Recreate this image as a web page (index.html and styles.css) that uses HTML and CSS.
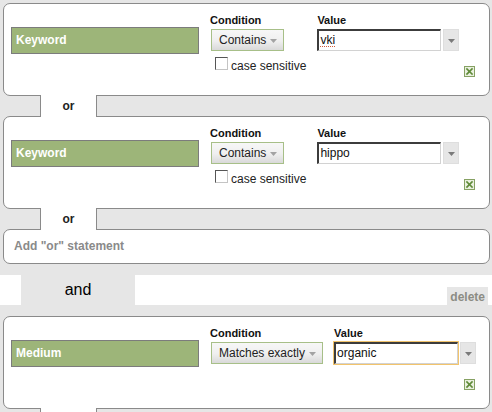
FILE: index.html
```html
<!DOCTYPE html>
<html>
<head>
<meta charset="utf-8">
<link rel="stylesheet" href="styles.css">
</head>
<body>
<div class="group">
  <div class="box rule">
    <div class="field">Keyword</div>
    <div class="cond">
      <div class="label">Condition</div>
      <div class="select">Contains<svg class="caret" width="7" height="4" viewBox="0 0 7 4"><polygon points="0,0 7,0 3.5,4"/></svg></div>
      <div class="check"><span class="cb"></span><span class="cb-text">case sensitive</span></div>
    </div>
    <div class="value">
      <div class="label">Value</div>
      <div class="combo">
        <div class="input"><span class="misspelled">vki</span></div>
        <div class="drop"><svg class="caret dark" width="7" height="4" viewBox="0 0 7 4"><polygon points="0,0 7,0 3.5,4"/></svg></div>
      </div>
    </div>
    <div class="remove"><svg width="11" height="11" viewBox="0 0 11 11"><rect x="0.5" y="0.5" width="10" height="10" fill="#eaf0e0" stroke="#86a163"/><path d="M3 3 L8 8 M8 3 L3 8" stroke="#5f8a38" stroke-width="1.7" stroke-linecap="square"/></svg></div>
  </div>
  <div class="tab">or</div>
  <div class="box rule">
    <div class="field">Keyword</div>
    <div class="cond">
      <div class="label">Condition</div>
      <div class="select">Contains<svg class="caret" width="7" height="4" viewBox="0 0 7 4"><polygon points="0,0 7,0 3.5,4"/></svg></div>
      <div class="check"><span class="cb"></span><span class="cb-text">case sensitive</span></div>
    </div>
    <div class="value">
      <div class="label">Value</div>
      <div class="combo">
        <div class="input">hippo</div>
        <div class="drop"><svg class="caret dark" width="7" height="4" viewBox="0 0 7 4"><polygon points="0,0 7,0 3.5,4"/></svg></div>
      </div>
    </div>
    <div class="remove"><svg width="11" height="11" viewBox="0 0 11 11"><rect x="0.5" y="0.5" width="10" height="10" fill="#eaf0e0" stroke="#86a163"/><path d="M3 3 L8 8 M8 3 L3 8" stroke="#5f8a38" stroke-width="1.7" stroke-linecap="square"/></svg></div>
  </div>
  <div class="tab">or</div>
  <div class="box add">Add "or" statement</div>
</div>

<div class="strip">
  <div class="and">and</div>
  <div class="delete">delete</div>
</div>

<div class="group">
  <div class="box rule">
    <div class="field">Medium</div>
    <div class="cond">
      <div class="label">Condition</div>
      <div class="select">Matches exactly<svg class="caret" width="7" height="4" viewBox="0 0 7 4"><polygon points="0,0 7,0 3.5,4"/></svg></div>
    </div>
    <div class="value">
      <div class="label">Value</div>
      <div class="combo">
        <div class="input focus">organic</div>
        <div class="drop"><svg class="caret dark" width="7" height="4" viewBox="0 0 7 4"><polygon points="0,0 7,0 3.5,4"/></svg></div>
      </div>
    </div>
    <div class="remove"><svg width="11" height="11" viewBox="0 0 11 11"><rect x="0.5" y="0.5" width="10" height="10" fill="#eaf0e0" stroke="#86a163"/><path d="M3 3 L8 8 M8 3 L3 8" stroke="#5f8a38" stroke-width="1.7" stroke-linecap="square"/></svg></div>
  </div>
  <div class="tab"></div>
</div>
</body>
</html>
```

FILE: styles.css
```css
html {
  overflow: hidden;
  background: #e6e6e6;
}

body {
  margin: 0;
  padding: 3px 2px 0 3px;
  background: #e6e6e6;
  font-family: "Liberation Sans", Arial, sans-serif;
  font-size: 12px;
  color: #222;
}

.box {
  box-sizing: border-box;
  background: #fff;
  border: 1px solid #8a8a8a;
  border-radius: 7px;
}

.rule {
  height: 93px;
  padding: 9px 13px 0 7px;
  display: grid;
  grid-template-columns: 188px auto minmax(0, 1fr);
  grid-template-rows: auto 1fr;
  column-gap: 11px;
  align-items: start;
}

.field {
  grid-row: 1 / 3;
  box-sizing: border-box;
  height: 27px;
  margin-top: 14px;
  background: #9db579;
  border: 1px solid #7c7c7c;
  color: #fff;
  font-weight: bold;
  font-size: 12px;
  line-height: 25px;
  padding-left: 4px;
}

.cond {
  grid-row: 1 / 3;
  display: flex;
  flex-direction: column;
  align-items: flex-start;
}

.value {
  grid-column: 3;
  grid-row: 1;
}

.label {
  font-size: 11px;
  font-weight: bold;
  line-height: 15px;
  margin-bottom: 1px;
  color: #111;
}

.select {
  box-sizing: border-box;
  height: 22px;
  margin-left: 1px;
  display: flex;
  align-items: center;
  gap: 4px;
  padding: 0 6px 0 7px;
  border: 1px solid #a7bf88;
  background: linear-gradient(#f7f7f7, #efefef 55%, #d9d9d9);
  font-size: 12px;
  color: #222;
  white-space: nowrap;
}

.caret {
  display: block;
  fill: #a3a3a3;
  margin-top: 1px;
}

.caret.dark {
  fill: #7a7a7a;
}

.check {
  display: flex;
  align-items: flex-start;
  margin-top: 6px;
  margin-left: 5px;
}

.cb {
  box-sizing: border-box;
  width: 13px;
  height: 13px;
  background: #fff;
  border: 1px solid;
  border-color: #555 #c4c4c4 #c4c4c4 #555;
}

.cb-text {
  margin-left: 3px;
  margin-top: 2px;
  line-height: 14px;
  font-size: 12px;
  white-space: nowrap;
}

.combo {
  display: flex;
  gap: 2px;
}

.input {
  box-sizing: border-box;
  width: 124px;
  height: 22px;
  border-style: solid;
  border-width: 2px 1px 1px 2px;
  border-color: #3c3c3c #d2d2d2 #d2d2d2 #3c3c3c;
  background: #fff;
  padding-left: 1px;
  line-height: 19px;
  font-size: 12px;
  color: #111;
}

.input.focus {
  box-shadow: 0 0 0 1px #f2c46c;
}

.misspelled {
  text-decoration: underline dotted #d05a3a;
  text-underline-offset: 2px;
}

.drop {
  box-sizing: border-box;
  width: 16px;
  height: 22px;
  background: #e6e6e6;
  border: 1px solid #dedede;
  display: flex;
  align-items: center;
  justify-content: center;
}

.remove {
  grid-column: 3;
  grid-row: 2;
  justify-self: end;
  margin-top: 15px;
  margin-right: 1px;
  line-height: 0;
}

.tab {
  position: relative;
  z-index: 1;
  box-sizing: border-box;
  width: 57px;
  height: 22px;
  margin: -1px 0 -1px 37px;
  background: #fff;
  border-left: 1px solid #8a8a8a;
  border-right: 1px solid #8a8a8a;
  text-align: center;
  font-weight: bold;
  font-size: 12px;
  line-height: 14px;
  padding-top: 4px;
  color: #222;
}

.add {
  height: 35px;
  padding: 9px 10px 0;
  font-weight: bold;
  line-height: 14px;
  color: #8a8a8a;
}

.strip {
  display: flex;
  align-items: flex-end;
  height: 30px;
  margin: 11px -2px 11px -3px;
  padding-left: 21px;
  background: #fff;
}

.and {
  width: 114px;
  height: 30px;
  background: #e6e6e6;
  text-align: center;
  font-size: 16px;
  line-height: 30px;
  color: #000;
}

.delete {
  box-sizing: border-box;
  height: 18px;
  margin-left: auto;
  margin-right: 4px;
  padding: 2px 3px 0;
  background: #e6e6e6;
  font-weight: bold;
  font-size: 12px;
  line-height: 16px;
  color: #8c8c84;
}
```
